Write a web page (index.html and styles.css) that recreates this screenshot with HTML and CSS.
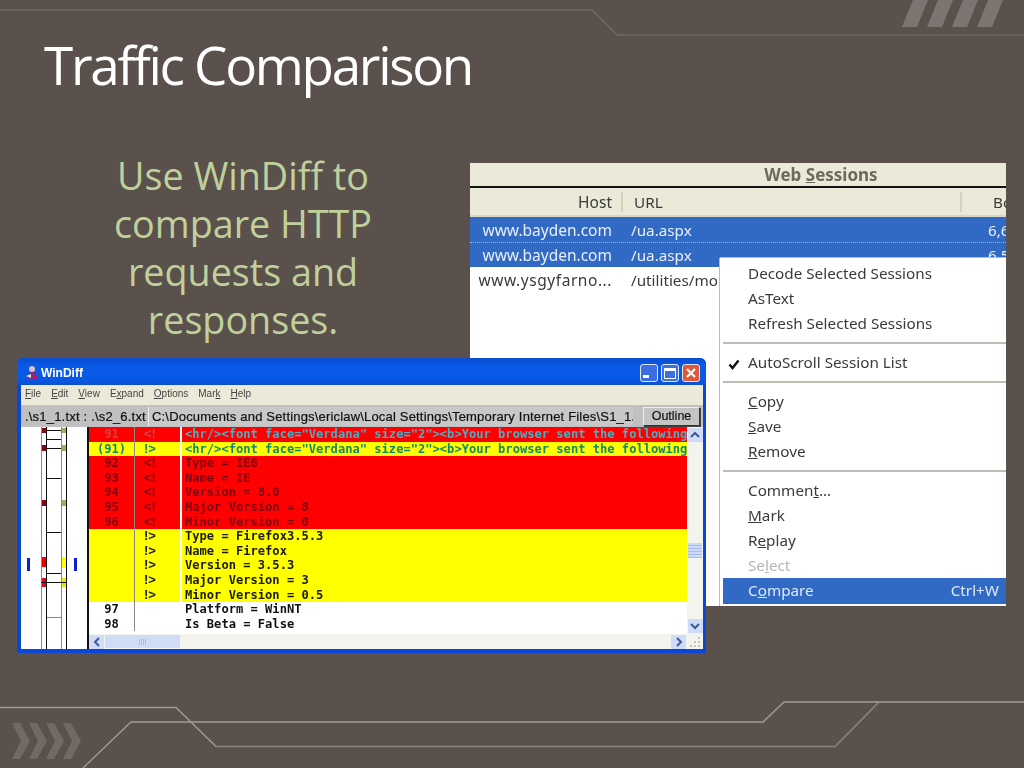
FILE: index.html
```html
<!DOCTYPE html>
<html lang="en">
<head>
<meta charset="utf-8">
<title>Traffic Comparison</title>
<link rel="stylesheet" href="styles.css">
</head>
<body>
<main class="slide">
  <svg class="decor" width="1024" height="768" viewBox="0 0 1024 768" aria-hidden="true">
    <polyline class="line-top" points="0,10 592,10 617,35 1024,35"/>
    <polyline class="line-low" points="0,707.5 176,707.5 216,746.5"/>
    <polyline class="line-dim" points="216,746.5 835,746.5 879,702"/>
    <polyline class="line-low" points="83,768 131,722 763,722 784,702 1024,702"/>
    <g class="stripes">
      <polygon points="913,0 928,0 917,27 902,27"/>
      <polygon points="938,0 953,0 942,27 927,27"/>
      <polygon points="963,0 978,0 967,27 952,27"/>
      <polygon points="988,0 1003,0 992,27 977,27"/>
    </g>
    <g class="chevrons">
      <polygon points="12,723 20,723 30,741 20,759 12,759 21,741"/>
      <polygon points="29,723 37,723 47,741 37,759 29,759 38,741"/>
      <polygon points="46,723 54,723 64,741 54,759 46,759 55,741"/>
      <polygon points="63,723 71,723 81,741 71,759 63,759 72,741"/>
    </g>
  </svg>

  <h1 class="title">Traffic Comparison</h1>
  <p class="lead">Use WinDiff to compare HTTP requests and responses.</p>

  <section class="sessions">
    <div class="sessions-title">Web <u>S</u>essions</div>
    <div class="columns row-grid">
      <span class="host col-host">Host</span><span class="url">URL</span><span class="size">Bo</span>
    </div>
    <div class="row-grid session selected"><span class="host">www.bayden.com</span><span class="url">/ua.aspx</span><span class="size">6,6</span></div>
    <div class="row-grid session selected dotted"><span class="host">www.bayden.com</span><span class="url">/ua.aspx</span><span class="size">6,5</span></div>
    <div class="row-grid session"><span class="host wide">www.ysgyfarno...</span><span class="url">/utilities/mouse</span><span class="size"></span></div>

    <div class="menu">
      <div class="item">Decode Selected Sessions</div>
      <div class="item">AsText</div>
      <div class="item">Refresh Selected Sessions</div>
      <div class="sep"></div>
      <div class="item"><svg class="check" width="12" height="12" viewBox="0 0 12 12" aria-hidden="true"><path d="M1.5 6.5 L4.5 10 L10.5 2.5" fill="none" stroke="#111" stroke-width="2.4"/></svg>AutoScroll Session List</div>
      <div class="sep"></div>
      <div class="item"><u>C</u>opy</div>
      <div class="item"><u>S</u>ave</div>
      <div class="item"><u>R</u>emove</div>
      <div class="sep"></div>
      <div class="item">Commen<u>t</u>...</div>
      <div class="item"><u>M</u>ark</div>
      <div class="item">R<u>e</u>play</div>
      <div class="item disabled">Se<u>l</u>ect</div>
      <div class="item active"><span>C<u>o</u>mpare</span><span>Ctrl+W</span></div>
    </div>
  </section>

  <section class="windiff">
    <header class="titlebar">
      <svg class="appicon" width="16" height="16" viewBox="0 0 16 16" aria-hidden="true">
        <circle cx="8" cy="4" r="3" fill="#d8c4c8"/>
        <path d="M3 14 L6 7 L11 7 L14 14 Z" fill="#7a2a8a"/>
        <path d="M2 11 L7 9 L7 13 Z" fill="#e8e0e0"/>
        <path d="M9 9 L14 11 L9 13 Z" fill="#c02040"/>
      </svg>
      <span class="wintitle">WinDiff</span>
      <span class="winbtns">
        <span class="winbtn"><i class="glyph-min"></i></span>
        <span class="winbtn"><i class="glyph-max"></i></span>
        <span class="winbtn close">
          <svg width="12" height="12" viewBox="0 0 12 12" aria-hidden="true"><path d="M2 2 L10 10 M10 2 L2 10" stroke="#fff" stroke-width="2.2"/></svg>
        </span>
      </span>
    </header>
    <div class="client">
      <nav class="menubar">
        <span><u>F</u>ile</span><span><u>E</u>dit</span><span><u>V</u>iew</span><span>E<u>x</u>pand</span><span><u>O</u>ptions</span><span>Mar<u>k</u></span><span><u>H</u>elp</span>
      </nav>
      <div class="pathbar">
        <span class="names">.\s1_1.txt : .\s2_6.txt</span>
        <span class="path">C:\Documents and Settings\ericlaw\Local Settings\Temporary Internet Files\S1_1.t</span>
        <span class="outline-btn">Outline</span>
      </div>
      <div class="diff">
        <svg class="outline" width="66" height="222" viewBox="0 0 66 222" aria-hidden="true">
          <rect x="20" y="0" width="6" height="222" fill="#fff"/>
          <rect x="40" y="0" width="6" height="222" fill="#fff"/>
          <g fill="#900018"><rect x="20" y="1" width="6" height="5"/><rect x="20" y="18" width="6" height="6"/><rect x="20" y="73" width="6" height="6"/></g>
          <g fill="#a8a860"><rect x="40" y="1" width="6" height="5"/><rect x="40" y="18" width="6" height="6"/><rect x="40" y="73" width="6" height="6"/></g>
          <rect x="20" y="130" width="6" height="10" fill="#f00000"/>
          <rect x="40" y="130" width="6" height="10" fill="#ffff00"/>
          <rect x="20" y="151" width="6" height="9" fill="#d01020"/>
          <rect x="40" y="151" width="6" height="9" fill="#e8e800"/>
          <path d="M20.5 0 V222 M40.5 0 V222" stroke="#8a8a8a" stroke-width="1"/>
          <path d="M26 3.5 H40 M26 12.5 H40 M26 21.5 H40 M26 51.5 H40 M26 105.5 H40 M26 146.5 H40 M20 155.5 H46 M25.5 0 V222 M45.5 0 V222" stroke="#111" stroke-width="1"/>
          <path d="M26 190.5 H40" stroke="#888" stroke-width="1"/>
          <rect x="6" y="131" width="3" height="13" fill="#1020d0"/>
          <rect x="53" y="131" width="3" height="13" fill="#1020d0"/>
        </svg>
        <div class="listing">
          <div class="rows">
            <div class="row red tag-teal"><span class="num">91</span><span class="tag">&lt;!</span><span class="code">&lt;hr/&gt;&lt;font face="Verdana" size="2"&gt;&lt;b&gt;Your browser sent the following</span></div>
            <div class="row yellow tag-teal"><span class="num">(91)</span><span class="tag">!&gt;</span><span class="code">&lt;hr/&gt;&lt;font face="Verdana" size="2"&gt;&lt;b&gt;Your browser sent the following</span></div>
            <div class="row red"><span class="num">92</span><span class="tag">&lt;!</span><span class="code">Type = IE8</span></div>
            <div class="row red"><span class="num">93</span><span class="tag">&lt;!</span><span class="code">Name = IE</span></div>
            <div class="row red"><span class="num">94</span><span class="tag">&lt;!</span><span class="code">Version = 8.0</span></div>
            <div class="row red"><span class="num">95</span><span class="tag">&lt;!</span><span class="code">Major Version = 8</span></div>
            <div class="row red"><span class="num">96</span><span class="tag">&lt;!</span><span class="code">Minor Version = 0</span></div>
            <div class="row yellow"><span class="num"></span><span class="tag">!&gt;</span><span class="code">Type = Firefox3.5.3</span></div>
            <div class="row yellow"><span class="num"></span><span class="tag">!&gt;</span><span class="code">Name = Firefox</span></div>
            <div class="row yellow"><span class="num"></span><span class="tag">!&gt;</span><span class="code">Version = 3.5.3</span></div>
            <div class="row yellow"><span class="num"></span><span class="tag">!&gt;</span><span class="code">Major Version = 3</span></div>
            <div class="row yellow"><span class="num"></span><span class="tag">!&gt;</span><span class="code">Minor Version = 0.5</span></div>
            <div class="row plain"><span class="num">97</span><span class="tag"></span><span class="code">Platform = WinNT</span></div>
            <div class="row plain"><span class="num">98</span><span class="tag"></span><span class="code">Is Beta = False</span></div>
          </div>
          <div class="vscroll">
            <span class="sbtn"><svg width="10" height="8" viewBox="0 0 10 8" aria-hidden="true"><path d="M1 6 L5 2 L9 6" fill="none" stroke="#3a5a9a" stroke-width="2"/></svg></span>
            <span class="vthumb"></span>
            <span class="sbtn"><svg width="10" height="8" viewBox="0 0 10 8" aria-hidden="true"><path d="M1 2 L5 6 L9 2" fill="none" stroke="#3a5a9a" stroke-width="2"/></svg></span>
          </div>
          <div class="hscroll">
            <span class="sbtn"><svg width="8" height="10" viewBox="0 0 8 10" aria-hidden="true"><path d="M6 1 L2 5 L6 9" fill="none" stroke="#3a5a9a" stroke-width="2"/></svg></span>
            <span class="hthumb"></span>
            <span class="sbtn"><svg width="8" height="10" viewBox="0 0 8 10" aria-hidden="true"><path d="M2 1 L6 5 L2 9" fill="none" stroke="#3a5a9a" stroke-width="2"/></svg></span>
          </div>
          <div class="grip">
            <svg width="16" height="15" viewBox="0 0 16 15" aria-hidden="true"><g fill="#c8c4b4"><rect x="11" y="3" width="2" height="2"/><rect x="7" y="7" width="2" height="2"/><rect x="11" y="7" width="2" height="2"/><rect x="3" y="11" width="2" height="2"/><rect x="7" y="11" width="2" height="2"/><rect x="11" y="11" width="2" height="2"/></g></svg>
          </div>
        </div>
      </div>
    </div>
  </section>
</main>
</body>
</html>
```
FILE: styles.css
```css
* { box-sizing: border-box; }
html, body { margin: 0; padding: 0; }
body { background: #5a514c; }

.slide {
  position: relative;
  width: 1024px;
  height: 768px;
  overflow: hidden;
  background: #5a514c;
  font-family: "Open Sans", sans-serif;
  padding: 26px 0 0 44px;
}
.decor { position: absolute; left: 0; top: 0; }
.decor polyline { fill: none; }
.line-top { stroke: #6f6763; stroke-width: 1.5; }
.line-low { stroke: #a39c97; stroke-width: 1.3; }
.line-dim { stroke: #8b847f; stroke-width: 1.5; }
.stripes polygon { fill: #7b7470; }
.chevrons polygon { fill: #716965; }

.title {
  position: relative;
  margin: 0;
  color: #fff;
  font-weight: 400;
  font-size: 53px;
  line-height: 78px;
  letter-spacing: -2.3px;
}
.lead {
  position: relative;
  width: 290px;
  margin: 48px 0 0 54px;
  text-align: center;
  color: #c0d09b;
  font-size: 37.7px;
  line-height: 48px;
}

/* Fiddler session list */
.sessions {
  position: absolute;
  left: 470px;
  top: 163px;
  width: 536px;
  height: 443px;
  background: #fff;
  overflow: hidden;
  font-family: "Noto Sans", sans-serif;
  font-size: 15.25px;
  color: #3a3a3a;
  filter: blur(0.35px);
}
.sessions-title {
  height: 23px;
  background: #ebe9d8;
  text-align: center;
  font-weight: 700;
  font-size: 17px;
  line-height: 24px;
  color: #6c6a5c;
  padding-left: 166px;
}
.row-grid {
  display: grid;
  grid-template-columns: 142px 357px 37px;
  align-items: center;
  white-space: nowrap;
}
.host { text-align: right; font-size: 15.5px; }
.wide { letter-spacing: 0.55px; }
.url { padding-left: 19px; overflow: hidden; }
.size { padding-left: 19px; overflow: hidden; }
.columns {
  height: 31px;
  background: #ebe9d8;
  border-top: 2px solid #111;
  border-bottom: 2px solid #d8d5c4;
}
.columns .url { border-left: 2px solid #d4d1c0; margin-left: 9px; padding-left: 11px; }
.columns .size { border-left: 2px solid #d4d1c0; margin-left: -9px; padding-left: 31px; }
.session { height: 25px; }
.selected { background: #316ac5; color: #e8eefa; }
.dotted { border-top: 1px dotted #9db4dc; }

.menu {
  position: absolute;
  left: 250px;
  top: 95px;
  width: 286px;
  height: 348px;
  background: #fff;
  border-left: 3px solid #fff;
  padding-top: 2.5px;
  box-shadow: -1px 0 0 #bdbdb5, 0 -1px 0 #bdbdb5;
}
.item {
  position: relative;
  height: 25px;
  line-height: 25px;
  padding: 0 7px 0 25px;
}
.check { position: absolute; left: 5px; top: 8px; }
.sep { height: 2px; margin: 6px 0; background: #bdbdb5; }
.disabled { color: #b5b5b5; }
.active {
  display: flex;
  justify-content: space-between;
  height: 26px;
  background: #316ac5;
  color: #dfe8f8;
}

/* WinDiff window */
.windiff {
  position: absolute;
  left: 17px;
  top: 358px;
  width: 689px;
  height: 295px;
  background: #0a46d8;
  border-radius: 6px 6px 0 0;
  padding: 0 3px 4px 4px;
  display: flex;
  flex-direction: column;
  font-family: "Liberation Sans", sans-serif;
  filter: blur(0.35px);
}
.titlebar {
  flex: none;
  height: 27px;
  margin: 0 -3px 0 -4px;
  padding: 3px 6px 0 7px;
  display: flex;
  align-items: center;
  gap: 1px;
  border-radius: 6px 6px 0 0;
  background: linear-gradient(#0a4cd0, #0a5ae8 30%, #0858e4 80%, #0a50d0);
  color: #fff;
}
.appicon { flex: none; }
.wintitle {
  flex: 1;
  font-weight: 700;
  font-size: 12px;
}
.winbtns { display: flex; gap: 3px; }
.winbtn {
  width: 18px;
  height: 18px;
  border: 1px solid #dfe8fa;
  border-radius: 3px;
  background: #3b6fe0;
  display: flex;
  align-items: center;
  justify-content: center;
}
.winbtn.close { background: #e0583a; }
.glyph-min { width: 6px; height: 3px; background: #fff; margin: 7px 6px 0 0; }
.glyph-max { width: 12px; height: 11px; border: 1px solid #fff; border-top-width: 3px; }

.client { flex: 1; display: flex; flex-direction: column; background: #ece9d8; min-height: 0; }
.menubar {
  flex: none;
  height: 20px;
  padding: 0 0 4px 4px;
  display: flex;
  align-items: center;
  gap: 10px;
  font-size: 10px;
  color: #444;
}
.pathbar {
  flex: none;
  height: 22px;
  display: flex;
  align-items: center;
  background: #c0c0c0;
  padding-left: 4px;
  font-size: 13px;
  color: #111;
  -webkit-text-stroke: 0.2px #111;
}
.names { flex: none; width: 123px; white-space: nowrap; letter-spacing: 0.2px; }
.path {
  flex: none;
  width: 485px;
  height: 19px;
  line-height: 19px;
  background: #c8c8c8;
  border-left: 1px solid #eee;
  padding-left: 3px;
  overflow: hidden;
  white-space: nowrap;
  letter-spacing: 0.18px;
}
.outline-btn {
  flex: none;
  width: 57px;
  height: 19px;
  margin-left: 10px;
  border: 1px solid #333;
  border-top-color: #eee;
  border-left-color: #eee;
  box-shadow: 1px 1px 0 #444;
  background: #c4c4c4;
  text-align: center;
  line-height: 17px;
  font-size: 12.5px;
}
.diff { flex: 1; display: flex; min-height: 0; background: #fff; }
.outline { flex: none; width: 66px; height: 222px; }
.listing {
  flex: 1;
  display: grid;
  grid-template-columns: 1fr 16px;
  grid-template-rows: 1fr 15px;
  border-left: 2px solid #111;
  min-height: 0;
}
.rows { overflow: hidden; padding-bottom: 3px; }
.row {
  display: grid;
  grid-template-columns: 45px 46px 1fr;
  height: 14.6px;
  line-height: 14.6px;
  font-family: "DejaVu Sans Mono", monospace;
  font-weight: 700;
  font-size: 12.1px;
  white-space: nowrap;
  overflow: hidden;
}
.red { background: #ff0000; color: #7a0010; }
.yellow { background: #ffff00; color: #1a1a10; }
.plain { background: #fff; color: #111; }
.tag-teal.red { color: #47b0c4; }
.tag-teal.yellow { color: #108a6a; }
.tag-teal.red .num, .tag-teal.red .tag { color: #c84848; }
.num { text-align: center; }
.tag {
  border-left: 1px solid #888;
  padding-left: 9px;
  font-family: "Liberation Sans", sans-serif;
  font-size: 13px;
}
.code { border-left: 2px solid #fff; padding-left: 3px; overflow: hidden; }

.vscroll {
  position: relative;
  display: flex;
  flex-direction: column;
  justify-content: space-between;
  align-items: center;
  background: #f4f4ee;
  padding: 1px 0;
}
.sbtn {
  flex: none;
  width: 15px;
  height: 14px;
  background: #cfdbf7;
  display: flex;
  align-items: center;
  justify-content: center;
}
.vthumb {
  position: absolute;
  left: 1px;
  top: 116px;
  width: 14px;
  height: 15px;
  background: repeating-linear-gradient(#cddaf7 0 2px, #a9bce8 2px 3px);
}
.hscroll {
  position: relative;
  display: flex;
  align-items: center;
  justify-content: space-between;
  background: #f4f4ee;
  padding-right: 1px;
}
.hthumb {
  position: absolute;
  left: 16px;
  top: 1px;
  width: 75px;
  height: 13px;
  background:
    repeating-linear-gradient(90deg, #a9bce8 0 1px, transparent 1px 2px) center / 7px 6px no-repeat,
    #cfdbf7;
}
.grip { background: #f4f4ee; }
.grip svg { display: block; }
```
